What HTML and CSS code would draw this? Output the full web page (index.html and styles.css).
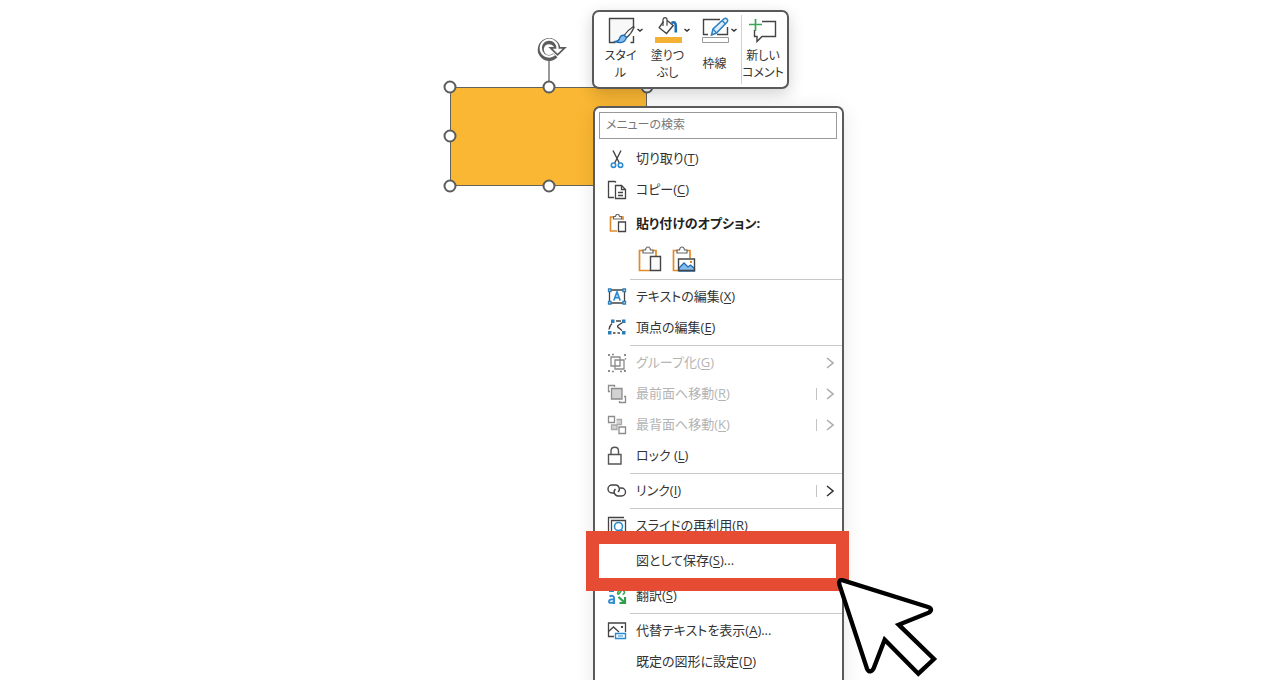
FILE: index.html
```html
<!DOCTYPE html>
<html lang="ja">
<head>
    <meta charset="UTF-8">
    <meta name="viewport" content="width=device-width, initial-scale=1.0">
    <title>図として保存</title>
    <link rel="stylesheet" href="styles.css">
</head>
<body>
    <main class="slide">
        <!-- Selected shape with its handles -->
        <svg class="shape" width="220" height="160" viewBox="440 34 220 160">
            <rect x="450.500" y="87.500" width="196" height="98" fill="#fab733" stroke="#66635c"/>
            <path d="M549 60v27" stroke="#777" stroke-width="1.500" fill="none"/>
            <g fill="#fff" stroke="#5c5c5c" stroke-width="2">
                <circle cx="450" cy="87" r="5.500"/>
                <circle cx="549" cy="87" r="5.500"/>
                <circle cx="647" cy="87" r="5.500"/>
                <circle cx="450" cy="136" r="5.500"/>
                <circle cx="450" cy="186" r="5.500"/>
                <circle cx="549" cy="186" r="5.500"/>
            </g>
            <path d="M555.300 55.300A8.400 8.400 0 1 1 557.400 48" fill="none" stroke="#5c5c5c" stroke-width="6"/>
            <path d="M550.500 47.800h14.200l-7.100 7z" fill="#fff" stroke="#5c5c5c" stroke-width="1.800"/>
            <path d="M554.300 54.700A8.400 8.400 0 1 1 557.400 49.500" fill="none" stroke="#fff" stroke-width="2.200"/>
        </svg>

        <!-- Mini toolbar -->
        <div class="toolbar">
            <button class="tool" type="button">
                <svg width="47" height="30" viewBox="0 0 47 30" fill="none">
                    <path d="M36.500 13.500v-10h-24v24h6M36.500 21v6.500h-3" fill="#f8f8f8" stroke="#444" stroke-width="1.400"/>
                    <path d="M36.500 11.500c-4 2.500-7.500 6-9.500 9l2.500 2.200c3-2.500 6-6.500 7.500-10.500z" fill="#fff" stroke="#444" stroke-width="1.200"/>
                    <path d="M27 20.200c-2.500-.2-4 1.300-4.500 3.300-.5 1.800-2 2.800-4 3 3 1.500 7 1.200 9-.5 1.500-1.200 2-2.500 1.800-3.800z" fill="#83bdec" stroke="#1f6cb5" stroke-width="1.400"/>
                    <path d="M40.500 14l2.500 2 2.500-2" stroke="#333" stroke-width="1.500"/>
                </svg>
                <span>スタイ<br>ル</span>
            </button>
            <button class="tool" type="button">
                <svg width="47" height="30" viewBox="0 0 47 30" fill="none">
                    <path d="M19.500 6.500l-4.300 6.200 7.300 5.800 6.700-8-6-5" stroke="#444" stroke-width="1.400"/>
                    <path d="M19 11V4.700c0-2.800 4-2.800 4 0v6" stroke="#444" stroke-width="1.200"/>
                    <path d="M27.500 8c3-1.800 4.300 0 4.300 3v6.500" stroke="#1f6cb5" stroke-width="2.600"/>
                    <path d="M11 22h27v6H11z" fill="#f5b133"/>
                    <path d="M40.500 14l2.500 2 2.500-2" stroke="#333" stroke-width="1.500"/>
                </svg>
                <span>塗りつ<br>ぶし</span>
            </button>
            <button class="tool" type="button">
                <svg width="47" height="30" viewBox="0 0 47 30" fill="none">
                    <path d="M17 19.500h-4.500v-15H29M36.500 12v7.500H26" stroke="#444" stroke-width="1.400"/>
                    <path d="M20.500 20l1.500-6L33 3.800c2-1.600 4.800 1 3.300 3L25.500 18z" fill="#dceefa" stroke="#2b7fc3" stroke-width="1.500"/>
                    <path d="M31 5.500l3.500 3.500M22 14l3.500 4" stroke="#2b7fc3" stroke-width="1.200"/>
                    <path d="M11.500 22.500h26v5h-26z" fill="#fff" stroke="#999"/>
                    <path d="M40.500 14l2.500 2 2.500-2" stroke="#333" stroke-width="1.500"/>
                </svg>
                <span>枠線</span>
            </button>
            <button class="tool comment" type="button">
                <svg width="42" height="30" viewBox="0 0 42 30" fill="none">
                    <path d="M20 6.500h13.500v15H20l-5 5v-5h-2.500V15" stroke="#444" stroke-width="1.400"/>
                    <path d="M13.500 4v12M7 9.500h13" stroke="#3aa657" stroke-width="1.700"/>
                </svg>
                <span>新しい<br>コメント</span>
            </button>
        </div>

        <!-- Context menu -->
        <div class="menu">
            <input class="search" type="text" placeholder="メニューの検索" aria-label="メニューの検索">
            <ul class="menu-list">
                <li><button class="item" type="button">
                    <svg class="icon" viewBox="0 0 20 20" fill="none">
                        <path d="M6 1.500l6.300 12.500M14 1.500L7.700 14" stroke="#444" stroke-width="1.400"/>
                        <circle cx="6.500" cy="16.200" r="2.200" stroke="#2b8bd0" stroke-width="1.600"/>
                        <circle cx="13.500" cy="16.200" r="2.200" stroke="#2b8bd0" stroke-width="1.600"/>
                    </svg>
                    <span>切り取り(<u>T</u>)</span>
                </button></li>
                <li><button class="item" type="button">
                    <svg class="icon" viewBox="0 0 20 20" fill="none" stroke="#444" stroke-width="1.300">
                        <path d="M7 17.500H1.500v-16H8l1 1"/>
                        <path d="M8.500 5.500h6l4 4v9h-10z" fill="#fff"/>
                        <path d="M14.500 5.500v4h4M11 12.500h5M11 15.500h5"/>
                    </svg>
                    <span>コピー(<u>C</u>)</span>
                </button></li>
                <li class="paste-title">
                    <svg class="icon" viewBox="0 0 20 20" fill="none">
                        <path d="M7 3H3.500v14H10M13 3h3v3" stroke="#e08a2c" stroke-width="1.600"/>
                        <path d="M6.500 5V2.500h2c.5-3 3.500-3 4 0h2V5z" fill="#fff" stroke="#666" stroke-width="1.200"/>
                        <path d="M11.500 8h7v9.500h-7z" fill="#fff" stroke="#444" stroke-width="1.300"/>
                    </svg>
                    <span>貼り付けのオプション:</span>
                </li>
                <li class="paste-options">
                    <button type="button" aria-label="貼り付け">
                        <svg width="24" height="28" viewBox="0 0 24 28" fill="none">
                            <path d="M7 4.500H1.500v20H12M12.500 4.500H18V10" stroke="#e08a2c" stroke-width="1.700"/>
                            <path d="M5 7V4h2.500c.5-4 4.500-4 5 0H15v3z" fill="#fff" stroke="#666" stroke-width="1.200"/>
                            <path d="M12.500 10.500h10v14h-10z" fill="#fafafa" stroke="#444" stroke-width="1.400"/>
                        </svg>
                    </button>
                    <button type="button" aria-label="図">
                        <svg width="24" height="28" viewBox="0 0 24 28" fill="none">
                            <path d="M7 4.500H1.500v20H6M12.500 4.500H18V12" stroke="#e08a2c" stroke-width="1.700"/>
                            <path d="M5 7V4h2.500c.5-4 4.500-4 5 0H15v3z" fill="#fff" stroke="#666" stroke-width="1.200"/>
                            <path d="M6.500 13h16v11.500h-16z" fill="#fff"/>
                            <path d="M7 22l5-5 4 4 2.500-2 4 3.500V25H7z" fill="#83bdec" stroke="#1f6cb5" stroke-width="1.300"/>
                            <path d="M6.500 13h16v11.500h-16z" stroke="#444" stroke-width="1.400"/>
                            <path d="M18 15h2v2h-2z" fill="#e08a2c"/>
                        </svg>
                    </button>
                </li>
                <li class="line"></li>
                <li><button class="item" type="button">
                    <svg class="icon" viewBox="0 0 20 20" fill="none">
                        <path d="M2.500 3h15v13h-15z" stroke="#444" stroke-width="1.300"/>
                        <path d="M6.800 13.500L10 5l3.200 8.500M8 10.700h4" stroke="#2b8bd0" stroke-width="1.700"/>
                        <path d="M1.500 2H4v2.500H1.500zM16 2h2.500v2.500H16zM1.500 14.500H4V17H1.500zM16 14.500h2.500V17H16z" fill="#fff" stroke="#2b7fb8" stroke-width="1.300"/>
                    </svg>
                    <span>テキストの編集(<u>X</u>)</span>
                </button></li>
                <li><button class="item" type="button">
                    <svg class="icon" viewBox="0 0 20 20" fill="none">
                        <path d="M2 11.500c.3-2.500 1.300-4.500 3-6M9 3h5M15.500 4.500L11 7.500c-1 1 0 2 1 2.500l3 2.500M6 15h2.500M10.500 15H13" stroke="#444" stroke-width="1.400"/>
                        <path d="M4 1.500h3.500V5H4zM15 1.500h3.500V5H15zM1 13h3.500v3.500H1zM15 13h3.500v3.500H15z" fill="#2b7fb8"/>
                    </svg>
                    <span>頂点の編集(<u>E</u>)</span>
                </button></li>
                <li class="line"></li>
                <li><button class="item" type="button" disabled>
                    <svg class="icon" viewBox="0 0 20 20" fill="none" stroke="#8c8c8c" stroke-width="1.300">
                        <path d="M4 4h9v9H4zM8 7h9v9H8z"/>
                        <path d="M1 1h2v2H1zM17 1h2v2h-2zM1 17h2v2H1zM17 17h2v2h-2z" fill="#8c8c8c" stroke="none"/>
                        <path d="M5 1.500h2M5 18.500h2M13 18.500h2M18.500 5v1.500"/>
                    </svg>
                    <span>グループ化(<u>G</u>)</span>
                    <svg class="arrow" viewBox="0 0 8 12"><path d="M1 1l6 5-6 5"/></svg>
                </button></li>
                <li><button class="item split" type="button" disabled>
                    <svg class="icon" viewBox="0 0 20 20" fill="none" stroke="#8c8c8c" stroke-width="1.300">
                        <path d="M3 7.500H1.500v-6h6V3M17 12.500h1.500v6h-6V17"/>
                        <path d="M4.500 4.500H15V15H4.500z" fill="#d2d2d2"/>
                    </svg>
                    <span>最前面へ移動(<u>R</u>)</span>
                    <svg class="arrow" viewBox="0 0 8 12"><path d="M1 1l6 5-6 5"/></svg>
                </button></li>
                <li><button class="item split" type="button" disabled>
                    <svg class="icon" viewBox="0 0 20 20" fill="none" stroke="#8c8c8c" stroke-width="1.300">
                        <path d="M9.500 4.500h5v5h-5M4.500 10v4.500H10V10z" fill="#d2d2d2" stroke="#aaa"/>
                        <path d="M1.500 1.500h6v6h-6zM12 12h6.500v6.500H12z" fill="#fff"/>
                    </svg>
                    <span>最背面へ移動(<u>K</u>)</span>
                    <svg class="arrow" viewBox="0 0 8 12"><path d="M1 1l6 5-6 5"/></svg>
                </button></li>
                <li><button class="item" type="button">
                    <svg class="icon" viewBox="0 0 20 20" fill="none" stroke="#555" stroke-width="1.400">
                        <path d="M1.500 8.500H14V18H1.500zM4 8.500V5c0-5 7.500-5 7.500 0v3.500"/>
                    </svg>
                    <span>ロック (<u>L</u>)</span>
                </button></li>
                <li class="line"></li>
                <li><button class="item split" type="button">
                    <svg class="icon" viewBox="0 0 20 20" fill="none" stroke="#444" stroke-width="1.400">
                        <path d="M7 12H5a4 4 0 0 1 0-8h3.500a4 4 0 0 1 2.500 7"/>
                        <path d="M13 7h1.500a4 4 0 0 1 0 8H11a4 4 0 0 1-2.500-7"/>
                    </svg>
                    <span>リンク(<u>I</u>)</span>
                    <svg class="arrow" viewBox="0 0 8 12"><path d="M1 1l6 5-6 5"/></svg>
                </button></li>
                <li class="line"></li>
                <li><button class="item" type="button">
                    <svg class="icon" viewBox="0 0 20 20" fill="none">
                        <path d="M1.500 18V1.500H17" stroke="#444" stroke-width="1.300"/>
                        <path d="M4.500 18V4.500h14V18" stroke="#444" stroke-width="1.300"/>
                        <circle cx="11.500" cy="10.500" r="4" stroke="#2b8bd0" stroke-width="1.600"/>
                        <path d="M14 13.500l3 3.500" stroke="#2b8bd0" stroke-width="1.500"/>
                    </svg>
                    <span>スライドの再利用(<u>R</u>)</span>
                </button></li>
                <li class="line"></li>
                <li class="highlight"><button class="item" type="button">
                    <span class="icon"></span>
                    <span>図として保存(<u>S</u>)...</span>
                </button></li>
                <li class="line"></li>
                <li><button class="item" type="button">
                    <svg class="icon" viewBox="0 0 20 20" fill="none">
                        <path d="M2.500 10.500c2-1.500 4.500-.8 4.500 1.500V18M7 13.500c-3-.5-5 .3-5 2s3.500 2 5 0" stroke="#2b8bd0" stroke-width="1.900"/>
                        <path d="M2 2h5v4H2z" fill="#2b8bd0"/>
                        <path d="M14.500 3.500c-1 3-2.500 5-3.500 4.500s0-4 3.500-4 4 4 1 4.500" stroke="#3aa657" stroke-width="1.600"/>
                        <path d="M11.500 11l5.500 5M18 11v6h-5.500" stroke="#2f9e4d" stroke-width="2.200"/>
                    </svg>
                    <span>翻訳(<u>S</u>)</span>
                </button></li>
                <li class="line"></li>
                <li><button class="item" type="button">
                    <svg class="icon" viewBox="0 0 20 20" fill="none">
                        <path d="M7 15.500H1.500V2h17v9" stroke="#444" stroke-width="1.300"/>
                        <path d="M1.500 10.500l5-4.500L12 11" stroke="#444" stroke-width="1.300"/>
                        <path d="M14 5h2v2h-2z" fill="#444"/>
                        <path d="M8.500 12.500h10v5h-10z" fill="#fff" stroke="#2b8bd0" stroke-width="1.400"/>
                        <path d="M11 15h5" stroke="#2b8bd0"/>
                    </svg>
                    <span>代替テキストを表示(<u>A</u>)...</span>
                </button></li>
                <li><button class="item" type="button">
                    <span class="icon"></span>
                    <span>既定の図形に設定(<u>D</u>)</span>
                </button></li>
            </ul>
        </div>

        <!-- Mouse pointer -->
        <svg class="pointer" width="130" height="115" viewBox="0 0 390 345">
            <path d="M69 46L324 126Q341 132 326 143L236 179 342 282 295 326 194 224 161 310Q150 328 141 311L58 58Q55 43 69 46z" fill="#fff" stroke="#000" stroke-width="13"/>
        </svg>
    </main>
</body>
</html>
```

FILE: styles.css
```css
* {
    box-sizing: border-box;
}
body {
    margin: 0;
    background-color: #fff;
    color: #333;
    font-family: "Open Sans", "Noto Sans CJK JP", sans-serif;
    font-size: 13px;
    font-feature-settings: "palt";
}
button {
    margin: 0;
    padding: 0;
    border: none;
    background: none;
    color: inherit;
    font: inherit;
    font-feature-settings: inherit;
}
/* The slide is a free canvas, the objects lie on it */
.slide {
    position: relative;
    height: 100vh;
    overflow: hidden;
}
.shape {
    position: absolute;
    left: 440px;
    top: 34px;
}
.toolbar {
    position: absolute;
    left: 592px;
    top: 10px;
    display: flex;
    padding: 3px;
    border: 2px solid #5a5a5a;
    border-radius: 7px;
    background-color: #fff;
    box-shadow: 0 5px 16px rgba(0, 0, 0, 0.18);
}
.tool {
    display: flex;
    flex-direction: column;
    align-items: center;
    width: 47px;
    height: 69px;
    font-size: 12px;
    line-height: 17px;
    white-space: nowrap;
}
.tool svg {
    flex-shrink: 0;
}
.tool span {
    flex: 1;
    display: block;
    align-content: center;
    padding-bottom: 2px;
    text-align: center;
}
.comment {
    width: 43px;
    margin-left: 3px;
    border-left: 1px solid #d0d0d0;
}
.menu {
    position: absolute;
    left: 593px;
    top: 106px;
    width: 251px;
    padding: 4px 0 32px;
    border: 2px solid #5a5a5a;
    border-radius: 7px;
    background-color: #fff;
    box-shadow: 0 4px 20px rgba(0, 0, 0, 0.1);
}
.search {
    display: block;
    width: 238px;
    height: 27px;
    margin: 0 4px 4px;
    padding: 0 6px 3px;
    border: 1px solid #999;
    font: inherit;
    font-size: 12px;
    font-feature-settings: inherit;
}
.search::placeholder {
    color: #777;
}
.menu-list {
    margin: 0;
    padding: 0;
    list-style: none;
}
.item {
    display: flex;
    align-items: center;
    gap: 9px;
    width: 100%;
    height: 31px;
    padding: 0 8px 0 12px;
    text-align: left;
    white-space: nowrap;
}
.item span,
.paste-title span {
    padding-bottom: 2px;
}
.item:disabled {
    color: #b4b4b4;
}
.item u {
    text-underline-offset: 2px;
}
.icon {
    flex-shrink: 0;
    width: 20px;
    height: 20px;
}
.arrow {
    width: 8px;
    height: 12px;
    margin-left: auto;
    fill: none;
    stroke: #333;
    stroke-width: 1.5;
}
.item:disabled .arrow {
    stroke: #aaa;
}
/* Split items have a thin bar before the arrow */
.split .arrow {
    box-sizing: content-box;
    padding-left: 9px;
    border-left: 1px solid #c4c4c4;
}
.paste-title {
    display: flex;
    align-items: center;
    gap: 9px;
    height: 37px;
    padding-left: 12px;
    color: #222;
    font-weight: bold;
}
.paste-options {
    display: flex;
    align-items: center;
    gap: 10px;
    height: 35px;
    padding-left: 43px;
}
.paste-options button,
.paste-options svg {
    display: block;
}
.line {
    height: 1px;
    margin: 2px 0 1px 35px;
    background-color: #c8c8c8;
}
.highlight {
    position: relative;
}
/* Red frame around the item to pick */
.highlight::after {
    content: "";
    position: absolute;
    z-index: 1;
    top: -14px;
    right: -7px;
    bottom: -15px;
    left: -9px;
    border: 13px solid #e64b33;
    pointer-events: none;
}
.pointer {
    position: absolute;
    z-index: 2;
    left: 820px;
    top: 565px;
}
```
